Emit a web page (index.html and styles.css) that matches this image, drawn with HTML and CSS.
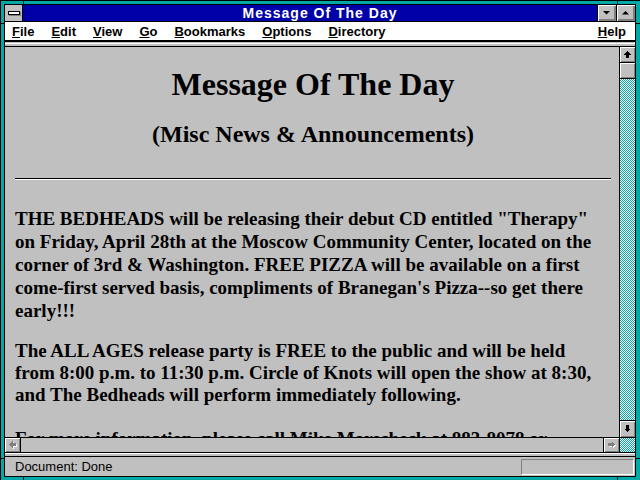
FILE: index.html
```html
<!DOCTYPE html>
<html>
<head>
<meta charset="utf-8">
<title>Message Of The Day</title>
<link rel="stylesheet" href="styles.css">
</head>
<body>
<div class="window">
  <span class="notch nv nt nl"></span>
  <span class="notch nv nt nr"></span>
  <span class="notch nv nb nl"></span>
  <span class="notch nv nb nr"></span>
  <span class="notch nh nlt nleft"></span>
  <span class="notch nh nlt nright"></span>
  <span class="notch nh nlb nleft"></span>
  <span class="notch nh nlb nright"></span>
  <div class="inner">
    <div class="titlebar">
      <div class="sysmenu"><span class="sysbar"></span></div>
      <div class="title">Message Of The Day</div>
      <div class="tbtn"><svg width="17" height="16" viewBox="0 0 17 16"><polygon points="5,6 12,6 8.5,9.5" fill="#000"/></svg></div>
      <div class="tbtn"><svg width="17" height="16" viewBox="0 0 17 16"><polygon points="5,9.5 12,9.5 8.5,6" fill="#000"/></svg></div>
    </div>
    <div class="menubar">
      <span class="mi"><u>F</u>ile</span>
      <span class="mi"><u>E</u>dit</span>
      <span class="mi"><u>V</u>iew</span>
      <span class="mi"><u>G</u>o</span>
      <span class="mi"><u>B</u>ookmarks</span>
      <span class="mi"><u>O</u>ptions</span>
      <span class="mi"><u>D</u>irectory</span>
      <span class="mi help"><u>H</u>elp</span>
    </div>
    <div class="band"></div>
    <div class="main">
      <div class="doc">
        <h1>Message Of The Day</h1>
        <h2>(Misc News &amp; Announcements)</h2>
        <hr>
        <p class="first">THE BEDHEADS will be releasing their debut CD entitled "Therapy"<br>on Friday, April 28th at the Moscow Community Center, located on the<br>corner of 3rd &amp; Washington. FREE PIZZA will be available on a first<br>come-first served basis, compliments of Branegan's Pizza--so get there<br>early!!!</p>
        <p>The ALL AGES release party is FREE to the public and will be held<br>from 8:00 p.m. to 11:30 p.m. Circle of Knots will open the show at 8:30,<br>and The Bedheads will perform immediately following.</p>
        <p>For more information, please call Mike Morscheck at 883-8078 or</p>
      </div>
      <div class="vscroll">
        <div class="sbtn up"><svg width="15" height="15" viewBox="0 0 15 15" shape-rendering="crispEdges"><polygon points="7.5,4 11,7.5 9,7.5 9,11 6,11 6,7.5 4,7.5" fill="#000"/></svg></div>
        <div class="sbtn thumb"></div>
        <div class="track"></div>
        <div class="sbtn down"><svg width="15" height="15" viewBox="0 0 15 15" shape-rendering="crispEdges"><polygon points="7.5,11 11,7.5 9,7.5 9,4 6,4 6,7.5 4,7.5" fill="#000"/></svg></div>
      </div>
    </div>
    <div class="hrow">
      <div class="hscroll">
        <div class="hbtn left"><svg width="15" height="14" viewBox="0 0 15 14" shape-rendering="crispEdges"><polygon points="5,7.5 8.5,4 8.5,6 12,6 12,9 8.5,9 8.5,11" fill="#fff"/><polygon points="4,6.5 7.5,3 7.5,5 11,5 11,8 7.5,8 7.5,10" fill="#808080"/></svg></div>
        <div class="htrack"></div>
        <div class="hbtn right"><svg width="15" height="14" viewBox="0 0 15 14" shape-rendering="crispEdges"><polygon points="12,7.5 8.5,4 8.5,6 5,6 5,9 8.5,9 8.5,11" fill="#fff"/><polygon points="11,6.5 7.5,3 7.5,5 4,5 4,8 7.5,8 7.5,10" fill="#808080"/></svg></div>
      </div>
      <div class="corner"></div>
    </div>
    <div class="band2"></div>
    <div class="status">
      <span class="stext">Document: Done</span>
      <span class="sfield"></span>
    </div>
  </div>
</div>
</body>
</html>
```
FILE: styles.css
```css
* { box-sizing: border-box; }
html, body { margin: 0; padding: 0; }
body {
  width: 640px;
  height: 480px;
  overflow: hidden;
  background: #00a8a8;
  font-family: "Liberation Sans", Arial, sans-serif;
}
.window {
  position: relative;
  width: 640px;
  height: 480px;
  background: #00a8a8;
  border-top: 1px solid #000;
  border-left: 1px solid #000;
  padding: 3px 4px 3px 3px;
}
.notch { position: absolute; background: #000; }
.nv { width: 1px; height: 4px; }
.nt { top: 0; }
.nb { bottom: 0; height: 4px; }
.nl { left: 22px; }
.nr { left: 616px; }
.nh { height: 1px; }
.nleft { left: 0; width: 4px; }
.nright { right: 0; width: 4px; }
.nlt { top: 22px; }
.nlb { top: 457px; }

.inner {
  height: 100%;
  border: 1px solid #000;
  background: #c0c0c0;
  display: flex;
  flex-direction: column;
}
.titlebar {
  height: 17px;
  flex: none;
  display: flex;
  background: #0000a8;
  border-bottom: 1px solid #000;
}
.sysmenu {
  width: 18px;
  background: #c0c0c0;
  border-right: 1px solid #000;
  display: flex;
  align-items: center;
  justify-content: center;
}
.sysbar {
  width: 12px;
  height: 4px;
  background: #fff;
  border: 1px solid #000;
  box-shadow: 1px 1px 0 #808080;
}
.title {
  flex: 1;
  color: #fff;
  font-weight: bold;
  font-size: 14px;
  line-height: 16px;
  text-align: center;
  letter-spacing: 1px;
  padding-left: 20px;
}
.tbtn {
  width: 19px;
  border-left: 1px solid #000;
  background: #c0c0c0;
  box-shadow: inset 1px 1px 0 #fff, inset -1px -1px 0 #808080, inset -2px -2px 0 #808080;
}
.tbtn svg { display: block; }
.menubar {
  height: 20px;
  flex: none;
  background: #fff;
  border-bottom: 2px solid #000;
  display: flex;
  gap: 17px;
  padding: 1px 9px 0 7px;
  font-weight: bold;
  font-size: 13px;
  line-height: 17px;
  color: #000;
}
.mi u { text-decoration-thickness: 1px; text-underline-offset: 1px; }
.help { margin-left: auto; }
.band {
  height: 5px;
  flex: none;
  background: linear-gradient(to bottom, #c0c0c0 0 1px, #fff 1px 2px, #c0c0c0 2px 4px, #000 4px 5px);
}
.main {
  height: 390px;
  flex: none;
  display: flex;
}
.doc {
  flex: 1;
  overflow: hidden;
  padding: 0 8px 0 10px;
  font-family: "Liberation Serif", "Times New Roman", serif;
  color: #000;
  white-space: nowrap;
}
.doc h1 {
  margin: 19px 0 0;
  font-size: 32px;
  line-height: 36px;
  text-align: center;
}
.doc h2 {
  margin: 18px 0 0;
  font-size: 24px;
  line-height: 28px;
  text-align: center;
}
.doc hr {
  margin: 30px 0 0;
  height: 0;
  border: 0;
  border-top: 1px solid #000;
  border-bottom: 1px solid #fff;
}
.doc p {
  margin: 22px 0 0;
  font-size: 19px;
  line-height: 22px;
  font-weight: bold;
}
.doc p.first {
  margin-top: 27px;
  margin-bottom: -4px;
  line-height: 23px;
}
.vscroll {
  width: 16px;
  flex: none;
  border-left: 1px solid #000;
  display: flex;
  flex-direction: column;
}
.sbtn {
  height: 16px;
  flex: none;
  background: #c0c0c0;
  box-shadow: inset 1px 1px 0 #fff, inset -1px -1px 0 #808080;
}
.sbtn svg { display: block; }
.up, .thumb { border-bottom: 1px solid #000; }
.down { border-top: 1px solid #000; height: 17px; }
.track {
  flex: 1;
  background: repeating-conic-gradient(#00a8a8 0% 25%, #ffffff 0% 50%) 0 0 / 2px 2px;
}
.hrow {
  height: 16px;
  flex: none;
  display: flex;
  border-top: 1px solid #000;
  border-bottom: 1px solid #000;
}
.hscroll { flex: 1; display: flex; }
.hbtn {
  width: 16px;
  background: #c0c0c0;
  box-shadow: inset 1px 1px 0 #fff, inset -1px -1px 0 #808080;
}
.hbtn svg { display: block; }
.hbtn.left { border-right: 1px solid #000; }
.hbtn.right { border-left: 1px solid #000; }
.htrack { flex: 1; background: #c0c0c0; }
.corner {
  width: 16px;
  border-left: 1px solid #000;
  background: repeating-conic-gradient(#00a8a8 0% 25%, #ffffff 0% 50%) 0 0 / 2px 2px;
}
.band2 {
  height: 4px;
  flex: none;
  background: linear-gradient(to bottom, #fff 0 1px, #c0c0c0 1px 3px, #000 3px 4px);
}
.status {
  flex: 1;
  display: flex;
  align-items: center;
  padding: 0 1px 0 10px;
}
.stext {
  flex: 1;
  font-size: 13px;
  line-height: 17px;
  color: #000;
}
.sfield {
  width: 113px;
  height: 16px;
  border-top: 1px solid #808080;
  border-left: 1px solid #808080;
  border-bottom: 1px solid #fff;
  border-right: 1px solid #fff;
}
```
